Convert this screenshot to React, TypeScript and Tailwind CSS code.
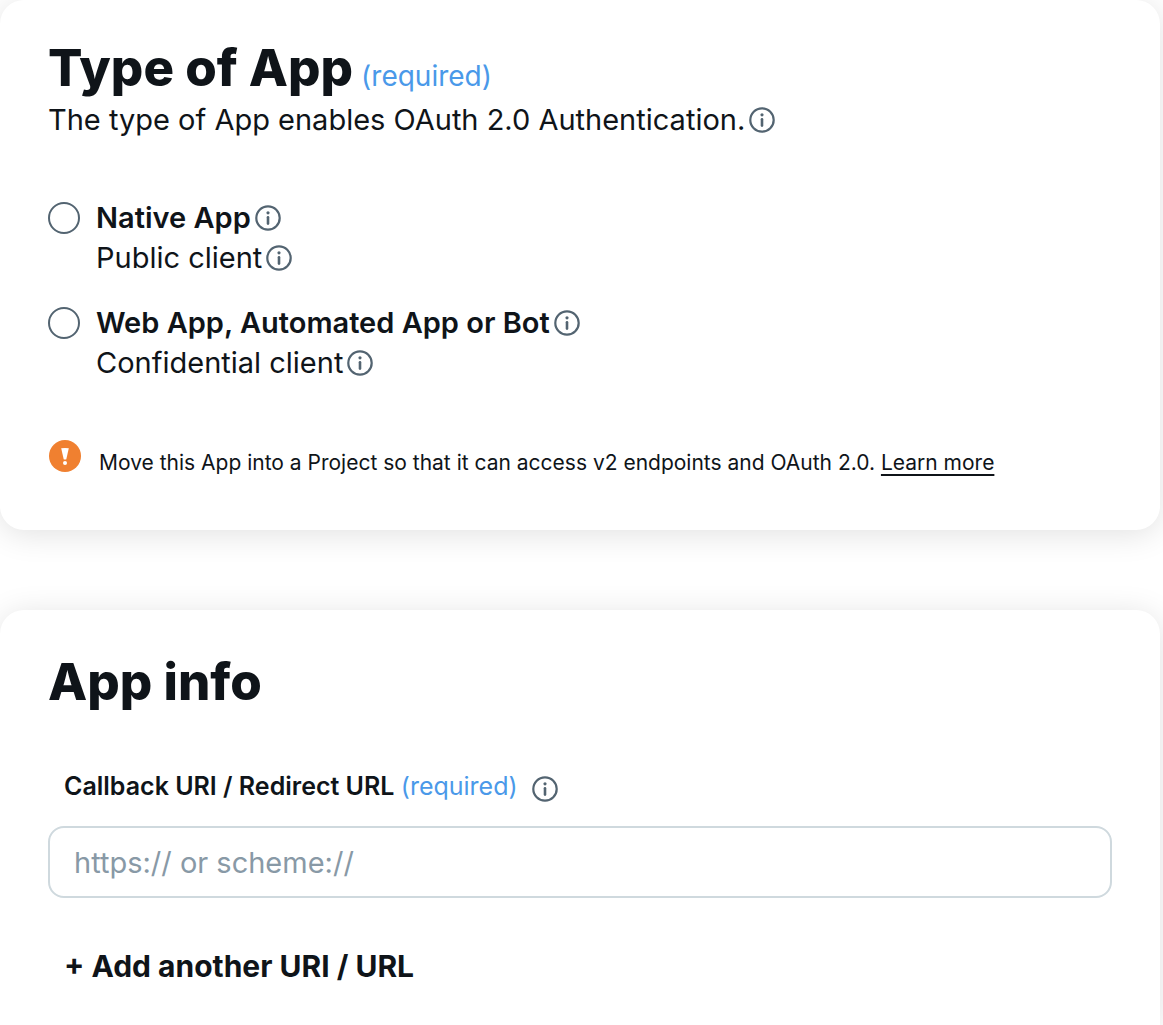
import { useState } from "react";

function InfoIcon() {
  return (
    <svg viewBox="0 0 26 26" className="size-[26px] shrink-0 text-[#536471]" fill="none" aria-hidden="true">
      <circle cx="13" cy="13" r="11.7" stroke="currentColor" strokeWidth="2.2" />
      <circle cx="13" cy="7.8" r="1.6" fill="currentColor" />
      <path d="M13 12.2v6.4" stroke="currentColor" strokeWidth="2.6" strokeLinecap="round" />
    </svg>
  );
}

function InfoButton({ label }: { label: string }) {
  return (
    <button type="button" aria-label={label} className="shrink-0 cursor-pointer">
      <InfoIcon />
    </button>
  );
}

function WarningIcon() {
  return (
    <svg viewBox="0 0 32 32" className="size-8 shrink-0" aria-hidden="true">
      <circle cx="16" cy="16" r="16" fill="#f08030" />
      <path d="M12.2 8.2q3.8-.5 7.6 0l-2.5 11q-1.3.6-2.6 0z" fill="#fff" />
      <circle cx="16" cy="23" r="2" fill="#fff" />
    </svg>
  );
}

const options = [
  { id: "native", title: "Native App", client: "Public client" },
  { id: "web", title: "Web App, Automated App or Bot", client: "Confidential client" },
];

export default function App() {
  const [selected, setSelected] = useState("");
  const [uris, setUris] = useState([""]);

  return (
    <main className="flex min-h-screen flex-col gap-20 overflow-hidden bg-white pr-[3px] font-['Inter',sans-serif] text-[#0f1419]">
      <section className="rounded-3xl bg-white px-12 pt-9 pb-[53px] shadow-[0_4px_32px_rgba(0,0,0,0.12)]">
        <div className="flex items-baseline gap-2">
          <h1 className="text-[51px] leading-[64px] font-extrabold">Type of App</h1>
          <span className="text-[28px] leading-10 text-[#4a99e9]">(required)</span>
        </div>
        <div className="flex items-center gap-1">
          <p className="text-[29px] leading-10">The type of App enables OAuth 2.0 Authentication.</p>
          <InfoButton label="About the type of App" />
        </div>

        <div className="mt-[58px] flex flex-col gap-[25px]">
          {options.map((o) => (
            <div key={o.id} className="flex items-start gap-4">
              <input
                type="radio"
                id={o.id}
                name="app-type"
                checked={selected === o.id}
                onChange={() => setSelected(o.id)}
                className="mt-1 size-8 shrink-0 appearance-none rounded-full border-2 border-[#536471] checked:border-8 checked:border-[#4a99e9]"
              />
              <div>
                <div className="flex items-center gap-1">
                  <label htmlFor={o.id} className="text-[29px] leading-10 font-semibold">{o.title}</label>
                  <InfoButton label={"About " + o.title} />
                </div>
                <div className="flex items-center gap-1">
                  <p className="text-[29px] leading-10">{o.client}</p>
                  <InfoButton label={"About " + o.client} />
                </div>
              </div>
            </div>
          ))}
        </div>

        <div className="mt-[57px] flex items-start gap-[18px] pl-px">
          <WarningIcon />
          <p className="mt-[9px] text-[21px] leading-7">
            Move this App into a Project so that it can access v2 endpoints and OAuth 2.0.{" "}
            <a href="#projects" className="underline underline-offset-4">Learn more</a>
          </p>
        </div>
      </section>

      <section className="grow rounded-t-3xl bg-white px-12 pt-10 pb-6 shadow-[0_4px_32px_rgba(0,0,0,0.12)]">
        <h2 className="text-[51px] leading-[64px] font-extrabold">App info</h2>
        <div className="mt-[52px] flex items-center gap-[14px] pl-4">
          <label htmlFor="uri-0" className="text-[25px] leading-10 font-semibold">
            Callback URI / Redirect URL <span className="font-normal text-[#4a99e9]">(required)</span>
          </label>
          <span className="flex pt-1.5">
            <InfoButton label="About the callback URI" />
          </span>
        </div>
        <div className="mt-5 flex flex-col gap-4">
          {uris.map((uri, i) => (
            <input
              key={i}
              id={"uri-" + i}
              type="url"
              value={uri}
              aria-label={i > 0 ? "Another callback URI" : undefined}
              onChange={(e) => setUris(uris.map((u, n) => (n === i ? e.target.value : u)))}
              placeholder="https:// or scheme://"
              className="h-[72px] w-full rounded-2xl border-2 border-[#cfd9de] bg-white px-6 text-[29px] placeholder:text-[#8899a6]"
            />
          ))}
        </div>
        <button
          type="button"
          onClick={() => setUris([...uris, ""])}
          className="mt-12 ml-4 block cursor-pointer text-[30px] leading-10 font-bold"
        >
          + Add another URI / URL
        </button>
      </section>
    </main>
  );
}
